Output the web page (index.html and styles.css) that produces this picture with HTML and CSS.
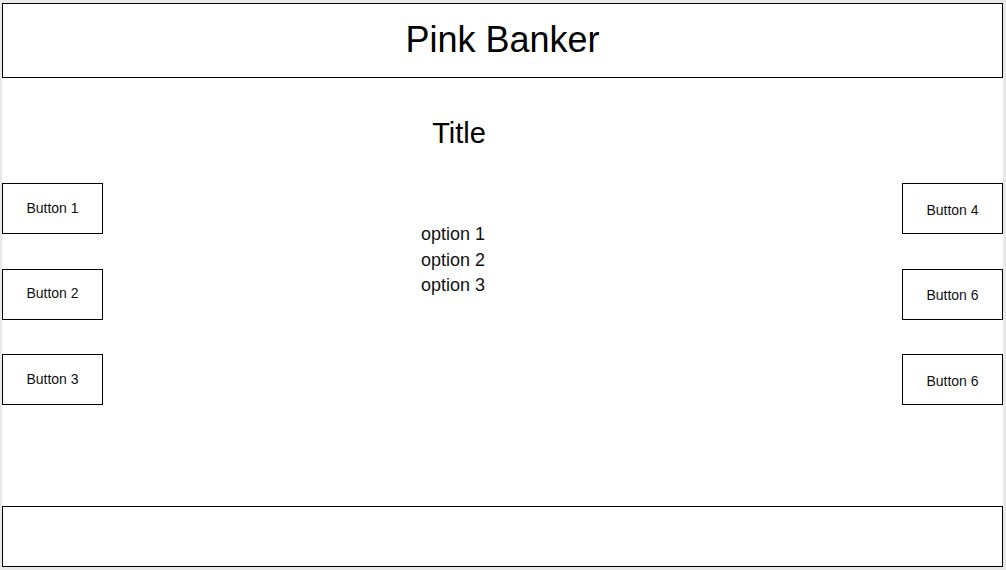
FILE: index.html
```html
<!DOCTYPE html>
<html lang="en">
<head>
<meta charset="utf-8">
<title>Pink Banker</title>
<link rel="stylesheet" href="styles.css">
</head>
<body>
<div class="page">
  <header class="header"><h1 class="brand">Pink Banker</h1></header>
  <main class="main">
    <div class="col col-left">
      <div class="btn">Button 1</div>
      <div class="btn">Button 2</div>
      <div class="btn">Button 3</div>
    </div>
    <div class="center">
      <div class="content">
        <h2 class="title">Title</h2>
        <ul class="options">
          <li>option 1</li>
          <li>option 2</li>
          <li>option 3</li>
        </ul>
      </div>
    </div>
    <div class="col col-right">
      <div class="btn">Button 4</div>
      <div class="btn">Button 6</div>
      <div class="btn">Button 6</div>
    </div>
  </main>
  <footer class="footer"></footer>
</div>
</body>
</html>
```

FILE: styles.css
```css
html, body {
  margin: 0;
  padding: 0;
  background: #e8e8e8;
  font-family: "Liberation Sans", Arial, sans-serif;
  color: #000;
}

.page {
  margin: 3px 3px 0 2px;
  width: 1001px;
  background: #fff;
}

.header {
  box-sizing: border-box;
  height: 75px;
  border: 1px solid #000;
  padding-top: 15px;
  text-align: center;
}

.brand {
  margin: 0;
  font-size: 36px;
  font-weight: normal;
  line-height: 41px;
}

.main {
  display: flex;
  height: 428px;
}

.col {
  display: flex;
  flex-direction: column;
  gap: 34.5px;
  padding-top: 105px;
  width: 101px;
  flex: none;
}

.btn {
  box-sizing: border-box;
  width: 101px;
  height: 51px;
  border: 1px solid #000;
  display: flex;
  align-items: center;
  justify-content: center;
  font-size: 14px;
  color: #111;
}

.col-left .btn {
  padding-bottom: 2px;
}

.col-right .btn {
  padding-top: 2px;
}

.center {
  flex: 1;
  padding-left: 318px;
}

.content {
  width: 76px;
}

.title {
  margin: 39px 0 0;
  font-size: 29px;
  font-weight: normal;
  line-height: 33px;
  text-align: center;
  white-space: nowrap;
}

.options {
  list-style: none;
  margin: 72px 0 0;
  padding: 0;
  font-size: 18px;
  line-height: 25.5px;
  white-space: nowrap;
  color: #111;
}

.footer {
  box-sizing: border-box;
  height: 61px;
  border: 1px solid #000;
}
```
